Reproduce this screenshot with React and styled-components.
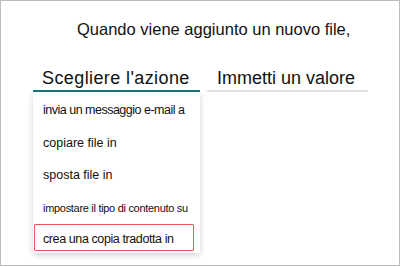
import styled, { createGlobalStyle } from 'styled-components';

const Global = createGlobalStyle`
  body {
    margin: 0;
    background: #fff;
    font-family: "Liberation Sans", Arial, sans-serif;
  }
`;

const Frame = styled.div`
  box-sizing: border-box;
  width: 400px;
  height: 266px;
  border: 1px solid #bdbdbd;
  background: #fff;
  color: #111;
`;

const Title = styled.div`
  padding: 18px 0 0 76px;
  font-size: 16.5px;
  line-height: 20px;
`;

const Fields = styled.div`
  display: flex;
  gap: 7px;
  margin: 30px 0 0 32px;
`;

const Field = styled.div`
  position: relative;
  box-sizing: border-box;
  width: ${p => p.$w}px;
  padding: 0 0 2px ${p => p.$pad}px;
  font-size: 18px;
  line-height: 19px;
  letter-spacing: ${p => p.$ls || 0}px;
  white-space: nowrap;
  border-bottom: 2px solid ${p => (p.$active ? '#137b7b' : '#e2e2e2')};
`;

const Menu = styled.div`
  position: absolute;
  left: 0;
  top: 23px;
  width: 167px;
  box-sizing: border-box;
  padding: 2px 6px 2px 1px;
  background: #fff;
  box-shadow: 0 2px 6px rgba(0, 0, 0, 0.18);
  display: flex;
  flex-direction: column;
  letter-spacing: 0;
`;

const Item = styled.div`
  box-sizing: border-box;
  height: ${p => (p.$selected ? 27 : 32.5)}px;
  padding: ${p => (p.$selected ? '3px 0 0 8px' : '1px 0 0 8px')};
  display: flex;
  align-items: center;
  white-space: nowrap;
  font-size: ${p => p.$size || 12.5}px;
  letter-spacing: ${p => p.$ls || 0}px;
  color: #111;
  border: 1.5px solid ${p => (p.$selected ? '#e3585d' : 'transparent')};
  border-radius: 1px;
`;

export default function App() {
  const actions = [
    { label: 'invia un messaggio e-mail a', ls: -0.5 },
    { label: 'copiare file in' },
    { label: 'sposta file in' },
    { label: 'impostare il tipo di contenuto su', size: 11, ls: -0.3 },
    { label: 'crea una copia tradotta in', ls: -0.4, selected: true },
  ];
  return (
    <>
      <Global />
      <Frame>
        <Title>Quando viene aggiunto un nuovo file,</Title>
        <Fields>
          <Field $w={167} $pad={9} $ls={0.4} $active>
            Scegliere l'azione
            <Menu>
              {actions.map(a => (
                <Item key={a.label} $size={a.size} $ls={a.ls} $selected={a.selected}>
                  {a.label}
                </Item>
              ))}
            </Menu>
          </Field>
          <Field $w={161} $pad={10}>
            Immetti un valore
          </Field>
        </Fields>
      </Frame>
    </>
  );
}
